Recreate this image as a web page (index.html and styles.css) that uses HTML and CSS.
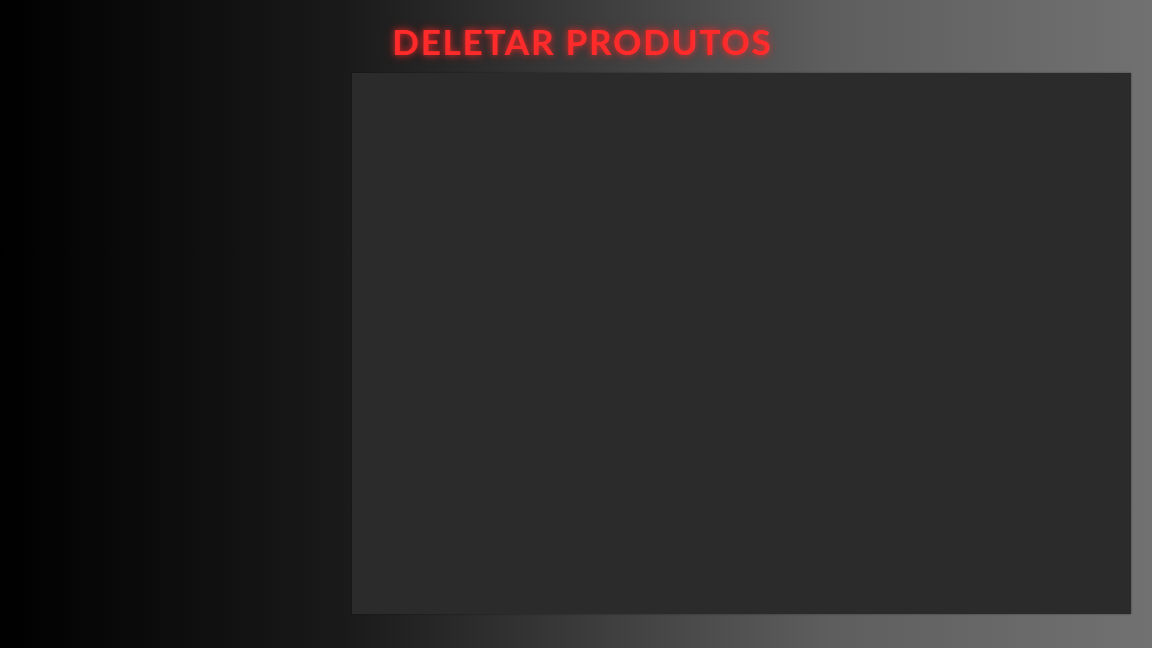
FILE: index.html
```html
<!DOCTYPE html>
<html lang="pt">
<head>
<meta charset="utf-8">
<title>Deletar Produtos</title>
<link rel="stylesheet" href="styles.css">
</head>
<body>
<div class="page">
  <header class="header">
    <h1 class="title">Deletar Produtos</h1>
  </header>
  <main class="panel-row">
    <section class="panel"></section>
  </main>
</div>
</body>
</html>
```

FILE: styles.css
```css
html, body {
  margin: 0;
  padding: 0;
  height: 100%;
}
body {
  background: linear-gradient(to right, #000000 0%, #1a1a1a 30%, #3a3a3a 50%, #5e5e5e 72%, #717171 100%);
  font-family: Lato, "Noto Sans", sans-serif;
}
.page {
  display: flex;
  flex-direction: column;
  height: 648px;
}
.header {
  height: 73px;
  display: flex;
  justify-content: center;
  align-items: center;
  padding-left: 12px;
  box-sizing: border-box;
}
.title {
  margin: 0;
  padding-top: 8px;
  font-size: 35px;
  font-weight: 700;
  letter-spacing: 1.8px;
  text-transform: uppercase;
  color: #ff2b2b;
  text-shadow: 0 0 6px rgba(255, 40, 40, 0.75), 0 0 12px rgba(255, 30, 30, 0.35);
}
.panel-row {
  display: flex;
  padding: 0 21px 34px 352px;
  flex: 1;
}
.panel {
  flex: 1;
  background: #2b2b2b;
  box-shadow: 0 0 2px rgba(0, 0, 0, 0.4);
}
```
